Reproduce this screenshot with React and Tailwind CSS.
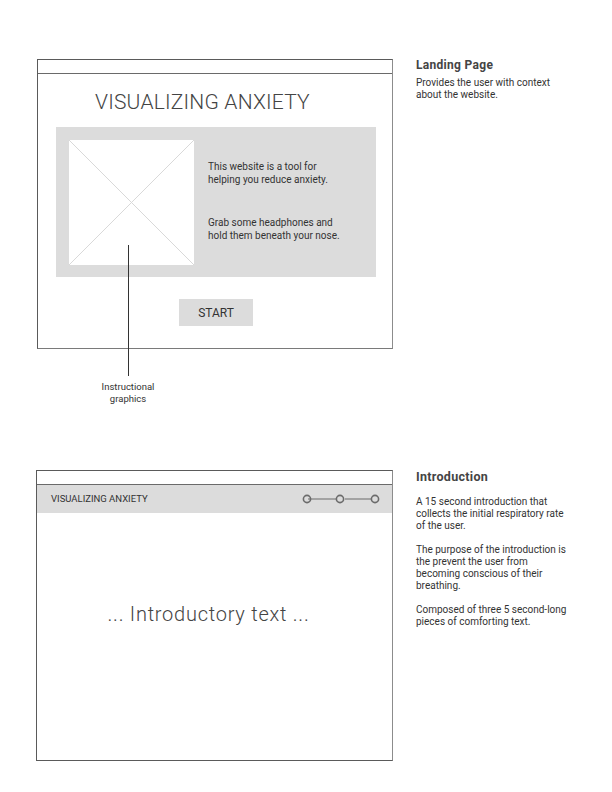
const font = { fontFamily: 'Roboto, "Liberation Sans", Arial, sans-serif' }

const Stepper = () => (
  <svg width="80" height="14" viewBox="0 0 80 14" className="block">
    <line x1="6" y1="7" x2="34" y2="7" stroke="#6b6b6b" strokeWidth="1" />
    <line x1="43" y1="7" x2="69" y2="7" stroke="#6b6b6b" strokeWidth="1" />
    <circle cx="5" cy="7" r="3.6" fill="none" stroke="#6b6b6b" strokeWidth="1.6" />
    <circle cx="38" cy="7" r="3.6" fill="none" stroke="#6b6b6b" strokeWidth="1.6" />
    <circle cx="73" cy="7" r="3.6" fill="none" stroke="#6b6b6b" strokeWidth="1.6" />
  </svg>
)

const Placeholder = () => (
  <div className="relative w-[125px] h-[125px] bg-white shrink-0">
    <svg width="125" height="125" viewBox="0 0 125 125" className="absolute inset-0">
      <line x1="0" y1="0" x2="125" y2="125" stroke="#d9d9d9" strokeWidth="1" />
      <line x1="125" y1="0" x2="0" y2="125" stroke="#d9d9d9" strokeWidth="1" />
    </svg>
  </div>
)

export default function App() {
  return (
    <div className="w-[612px] h-[792px] bg-white text-[#3a3a3a] overflow-hidden" style={font}>
      {/* Landing page */}
      <div className="flex pt-[59px] pl-[37px]">
        <div className="relative w-[356px] h-[290px] border border-[#5a5a5a] border-r-[#8c8c8c] border-b-[#7a7a7a] flex flex-col">
          <div className="h-[14px] border-b border-[#6a6a6a] shrink-0" />
          <h1 className="mt-[16px] pl-[57px] text-[21px] leading-[24px] font-light tracking-[0.2px] text-[#444]">
            VISUALIZING ANXIETY
          </h1>
          <div className="mt-[13px] ml-[18px] w-[320px] h-[150px] bg-[#dcdcdc] flex items-start p-[13px]">
            <Placeholder />
            <div className="ml-[14px] pt-[20px] text-[10px] leading-[13px] text-[#333]">
              <p>This website is a tool for<br />helping you reduce anxiety.</p>
              <p className="mt-[30px]">Grab some headphones and<br />hold them beneath your nose.</p>
            </div>
          </div>
          <div className="mt-[22px] ml-[141px] w-[74px] h-[27px] bg-[#dcdcdc] flex items-center justify-center text-[12px] text-[#333]">
            START
          </div>
          {/* annotation */}
          <div className="absolute left-[90px] top-[185px] w-[0px] flex flex-col items-center">
            <div className="w-px h-[131px] bg-[#333]" />
            <p className="mt-[5px] w-[100px] text-center text-[9.5px] leading-[12px] text-[#333]">
              Instructional<br />graphics
            </p>
          </div>
        </div>
        <div className="ml-[23px] w-[175px]">
          <h2 className="text-[12px] leading-[13px] font-bold tracking-[0.3px] text-[#444]">Landing Page</h2>
          <p className="mt-[5px] text-[10px] leading-[12px] text-[#333]">
            Provides the user with context<br />about the website.
          </p>
        </div>
      </div>

      {/* Introduction */}
      <div className="flex mt-[121px] pl-[36px]">
        <div className="w-[357px] h-[291px] border border-[#5a5a5a] border-r-[#8c8c8c] flex flex-col">
          <div className="h-[14px] border-b border-[#6a6a6a] shrink-0" />
          <div className="h-[28px] bg-[#dcdcdc] flex items-center justify-between pl-[14px] pr-[10px] shrink-0">
            <span className="text-[9.5px] text-[#333]">VISUALIZING ANXIETY</span>
            <Stepper />
          </div>
          <div className="flex-1 flex justify-center pt-[89px] pr-[12px]">
            <p className="text-[20px] leading-[24px] font-light tracking-[0.75px] text-[#444]">... Introductory text ...</p>
          </div>
        </div>
        <div className="ml-[23px] w-[175px]">
          <h2 className="text-[12.5px] leading-[13px] font-bold tracking-[0.3px] text-[#444]">Introduction</h2>
          <div className="mt-[13px] text-[10px] leading-[12px] text-[#333] flex flex-col gap-[12px]">
            <p>A 15 second introduction that<br />collects the initial respiratory rate<br />of the user.</p>
            <p>The purpose of the introduction is<br />the prevent the user from<br />becoming conscious of their<br />breathing.</p>
            <p>Composed of three 5 second-long<br />pieces of comforting text.</p>
          </div>
        </div>
      </div>
    </div>
  )
}
